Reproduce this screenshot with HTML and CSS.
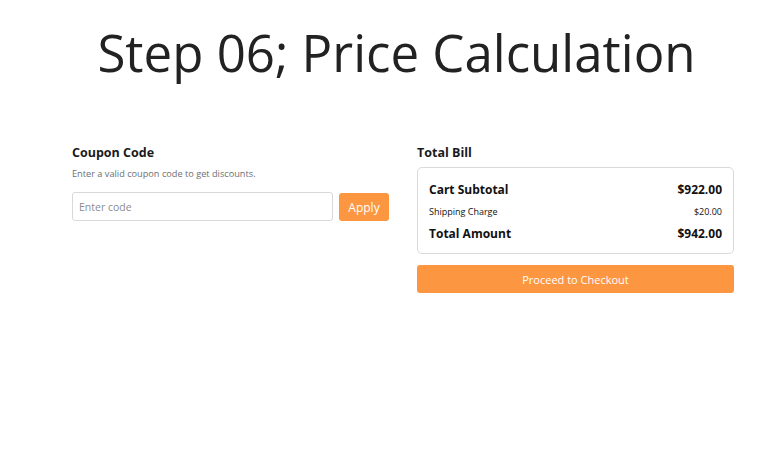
FILE: index.html
```html
<!DOCTYPE html>
<html lang="en">
<head>
<meta charset="utf-8">
<title>Price Calculation</title>
<link rel="stylesheet" href="styles.css">
</head>
<body>
<h1 class="title">Step 06; Price Calculation</h1>
<main class="wrap">
  <section class="col">
    <h2 class="label">Coupon Code</h2>
    <p class="hint">Enter a valid coupon code to get discounts.</p>
    <form class="coupon">
      <input class="code" type="text" placeholder="Enter code">
      <button class="btn apply" type="button">Apply</button>
    </form>
  </section>
  <section class="col">
    <h2 class="label">Total Bill</h2>
    <div class="bill">
      <div class="row big"><span>Cart Subtotal</span><span>$922.00</span></div>
      <div class="row small"><span>Shipping Charge</span><span>$20.00</span></div>
      <div class="row big"><span>Total Amount</span><span>$942.00</span></div>
    </div>
    <button class="btn checkout" type="button">Proceed to Checkout</button>
  </section>
</main>
</body>
</html>
```

FILE: styles.css
```css
* { box-sizing: border-box; }
body {
  margin: 0;
  background: #fff;
  color: #212529;
  font-family: "Open Sans", "Noto Sans", sans-serif;
}
.title {
  margin: 22px 0 0 26px;
  text-align: center;
  font-weight: 400;
  font-size: 51px;
  line-height: 60px;
  color: #222;
}
.wrap {
  display: flex;
  gap: 28px;
  padding: 62px 0 0 72px;
}
.col { width: 317px; }
.label {
  margin: 0;
  font-size: 12.5px;
  font-weight: 700;
  line-height: 18px;
  color: #1a1a1a;
}
.hint {
  margin: 5px 0 0;
  font-size: 9.2px;
  line-height: 14px;
  color: #6c6f74;
}
.coupon {
  display: flex;
  gap: 6px;
  margin-top: 11px;
}
.code {
  width: 261px;
  height: 29px;
  border: 1px solid #d6d8db;
  border-radius: 3px;
  padding: 0 6px;
  font-family: inherit;
  font-size: 10.5px;
  color: #333;
}
.code::placeholder { color: #8a8d91; }
.btn {
  border: 0;
  border-radius: 3px;
  background: #fd9640;
  color: #fff;
  font-family: inherit;
  font-size: 11px;
}
.apply {
  width: 50px;
  height: 28px;
  margin-top: 1px;
  font-size: 12px;
}
.bill {
  margin-top: 5px;
  border: 1px solid #d8dadd;
  border-radius: 5px;
  padding: 13px 11px 10px;
}
.row {
  display: flex;
  justify-content: space-between;
  color: #111;
}
.row.big {
  font-size: 12px;
  font-weight: 700;
  line-height: 18px;
}
.row.small {
  font-size: 9px;
  line-height: 14px;
  margin: 6px 0;
}
.checkout {
  display: block;
  width: 100%;
  height: 28px;
  margin-top: 11px;
}
```
